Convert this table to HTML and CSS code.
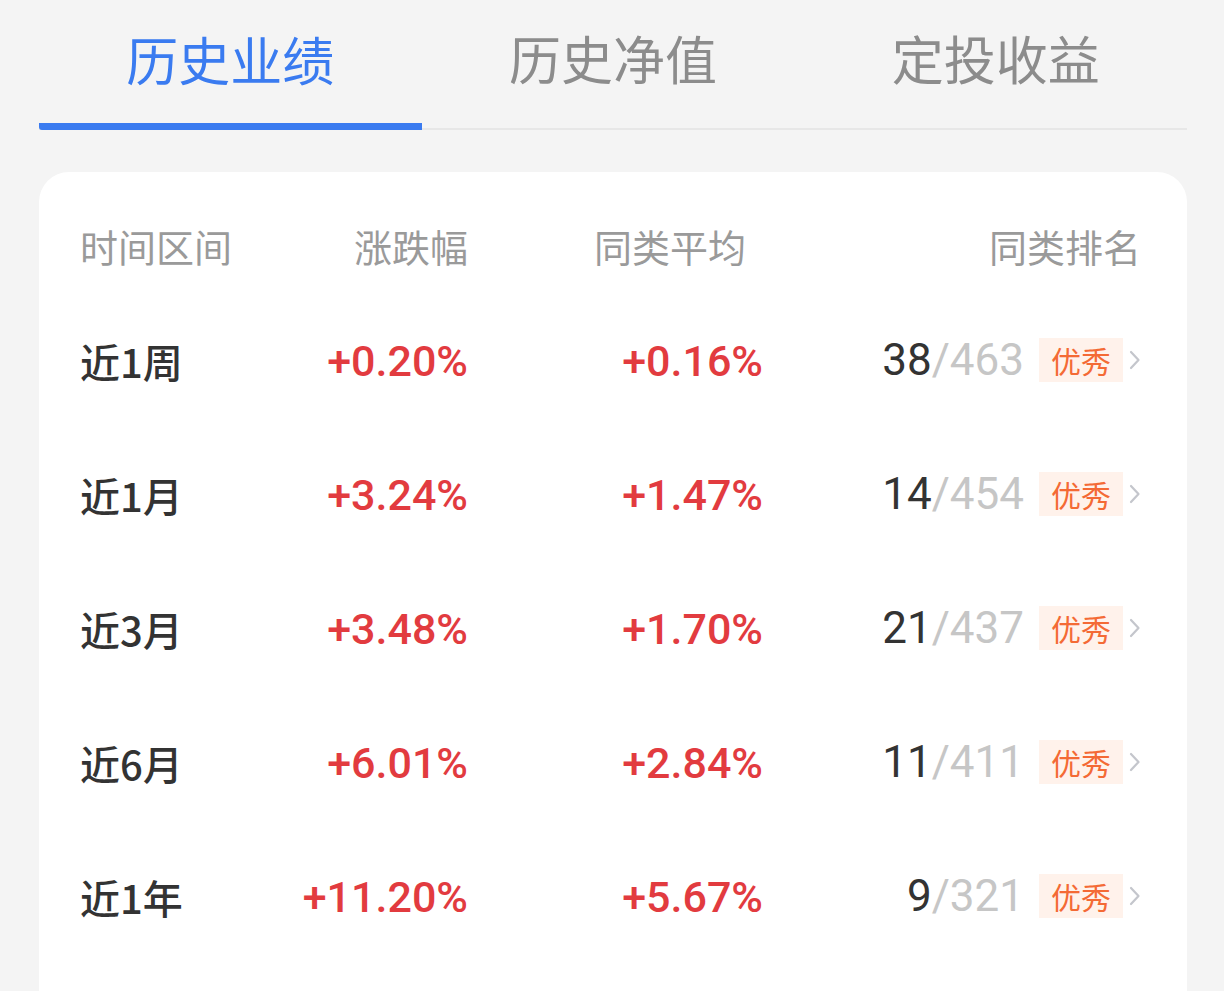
FILE: index.html
```html
<!DOCTYPE html>
<html lang="zh-CN">
<head>
<meta charset="utf-8">
<title>历史业绩</title>
<link rel="stylesheet" href="styles.css">
</head>
<body>
<div class="page">
  <nav class="tabs">
    <div class="tab active">历史业绩</div>
    <div class="tab">历史净值</div>
    <div class="tab">定投收益</div>
  </nav>
  <section class="card">
    <div class="row head">
      <div class="c1">时间区间</div>
      <div class="c2">涨跌幅</div>
      <div class="c3">同类平均</div>
      <div class="c4">同类排名</div>
    </div>
    <div class="row">
      <div class="c1 label">近1周</div>
      <div class="c2 num up">+0.20%</div>
      <div class="c3 num up">+0.16%</div>
      <div class="c4 rank"><span class="rk">38</span><span class="tot">/463</span><span class="badge">优秀</span><svg class="chev" viewBox="0 0 12 22" width="12" height="22"><path d="M2 3 L9.5 11 L2 19" fill="none" stroke="#c4c6cc" stroke-width="2.2" stroke-linecap="round" stroke-linejoin="round"/></svg></div>
    </div>
    <div class="row">
      <div class="c1 label">近1月</div>
      <div class="c2 num up">+3.24%</div>
      <div class="c3 num up">+1.47%</div>
      <div class="c4 rank"><span class="rk">14</span><span class="tot">/454</span><span class="badge">优秀</span><svg class="chev" viewBox="0 0 12 22" width="12" height="22"><path d="M2 3 L9.5 11 L2 19" fill="none" stroke="#c4c6cc" stroke-width="2.2" stroke-linecap="round" stroke-linejoin="round"/></svg></div>
    </div>
    <div class="row">
      <div class="c1 label">近3月</div>
      <div class="c2 num up">+3.48%</div>
      <div class="c3 num up">+1.70%</div>
      <div class="c4 rank"><span class="rk">21</span><span class="tot">/437</span><span class="badge">优秀</span><svg class="chev" viewBox="0 0 12 22" width="12" height="22"><path d="M2 3 L9.5 11 L2 19" fill="none" stroke="#c4c6cc" stroke-width="2.2" stroke-linecap="round" stroke-linejoin="round"/></svg></div>
    </div>
    <div class="row">
      <div class="c1 label">近6月</div>
      <div class="c2 num up">+6.01%</div>
      <div class="c3 num up">+2.84%</div>
      <div class="c4 rank"><span class="rk">11</span><span class="tot">/411</span><span class="badge">优秀</span><svg class="chev" viewBox="0 0 12 22" width="12" height="22"><path d="M2 3 L9.5 11 L2 19" fill="none" stroke="#c4c6cc" stroke-width="2.2" stroke-linecap="round" stroke-linejoin="round"/></svg></div>
    </div>
    <div class="row">
      <div class="c1 label">近1年</div>
      <div class="c2 num up">+11.20%</div>
      <div class="c3 num up">+5.67%</div>
      <div class="c4 rank"><span class="rk">9</span><span class="tot">/321</span><span class="badge">优秀</span><svg class="chev" viewBox="0 0 12 22" width="12" height="22"><path d="M2 3 L9.5 11 L2 19" fill="none" stroke="#c4c6cc" stroke-width="2.2" stroke-linecap="round" stroke-linejoin="round"/></svg></div>
    </div>
  </section>
</div>
</body>
</html>
```

FILE: styles.css
```css
* { box-sizing: border-box; }
html, body {
  margin: 0;
  padding: 0;
  background: #f4f4f4;
  height: 100%;
  overflow: hidden;
}
body {
  font-family: "Noto Sans CJK SC", "Noto Sans", sans-serif;
  color: #333;
}
.page {
  padding: 0 37px 0 39px;
}
.tabs {
  display: flex;
  border-bottom: 2px solid #e7e7e7;
  height: 130px;
}
.tab {
  flex: 1;
  height: 128px;
  display: flex;
  align-items: center;
  justify-content: center;
  padding-bottom: 13px;
  font-size: 52px;
  color: #8c8c8c;
}
.tab.active {
  color: #3a7bf0;
  height: 130px;
  border-bottom: 7px solid #3a7bf0;
  border-radius: 0 0 0 3px;
  padding-bottom: 6px;
}
.card {
  margin-top: 42px;
  background: #fff;
  border-radius: 30px 30px 0 0;
  padding: 28px 46px 0 41px;
  height: 830px;
}
.row {
  display: grid;
  grid-template-columns: 200px 188px 295px 1fr;
  align-items: center;
  height: 134px;
}
.row.head {
  height: 94px;
  font-size: 38px;
  color: #9a9a9a;
  padding-bottom: 4px;
}
.head .c3 { text-align: right; padding-right: 17px; }
.c2, .c3 { text-align: right; }
.c4 { text-align: right; }
.label {
  font-size: 40px;
  font-weight: 500;
  color: #333;
}
.num {
  font-family: Roboto, "Liberation Sans", sans-serif;
  font-size: 43px;
  font-weight: 500;
}
.up { color: #e23b3f; }
.rank {
  display: flex;
  align-items: center;
  justify-content: flex-end;
  padding-bottom: 2px;
}
.rk, .tot {
  font-family: Roboto, "Liberation Sans", sans-serif;
  font-size: 44px;
  line-height: 1;
}
.rk { color: #333; }
.tot { color: #c6c6c6; }
.badge {
  margin-left: 15px;
  background: #fff2eb;
  color: #f46a35;
  font-size: 30px;
  line-height: 44px;
  height: 44px;
  padding: 0 12px;
}
.chev {
  margin-left: 6px;
  display: block;
}
```
